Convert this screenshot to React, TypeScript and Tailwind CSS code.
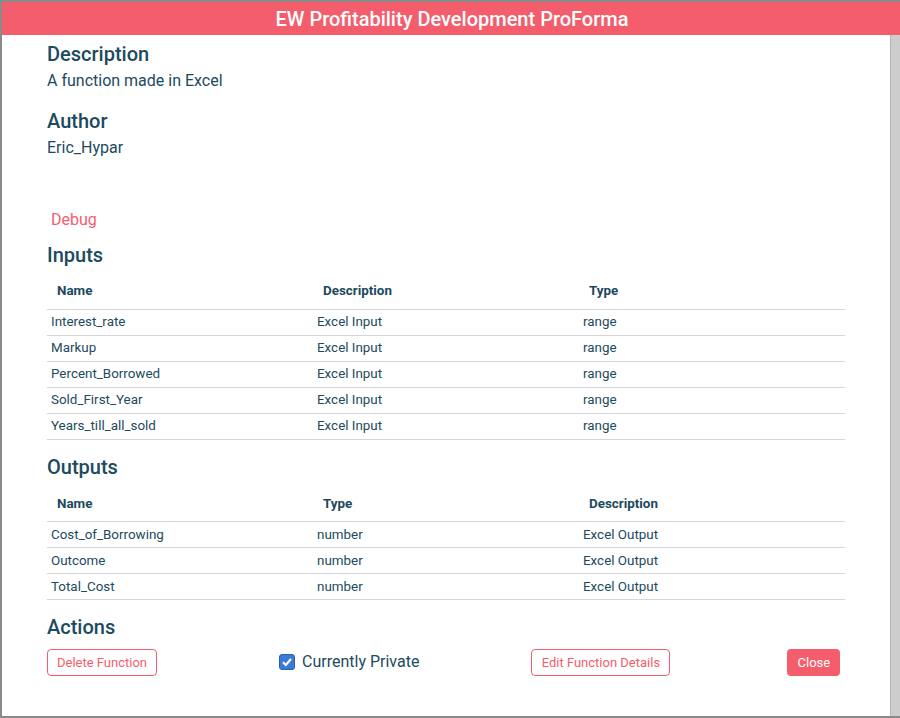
const inputs = [
  ["Interest_rate", "Excel Input", "range"],
  ["Markup", "Excel Input", "range"],
  ["Percent_Borrowed", "Excel Input", "range"],
  ["Sold_First_Year", "Excel Input", "range"],
  ["Years_till_all_sold", "Excel Input", "range"],
];

const outputs = [
  ["Cost_of_Borrowing", "number", "Excel Output"],
  ["Outcome", "number", "Excel Output"],
  ["Total_Cost", "number", "Excel Output"],
];

const DataTable = ({ head, rows }: { head: string[]; rows: string[][] }) => (
  <table className="w-[798px] border-collapse text-[13.4px] table-fixed">
    <thead>
      <tr className="h-[36px]">
        {head.map((h) => (
          <th key={h} className="text-left font-bold px-[10px] pt-[1px]">
            {h}
          </th>
        ))}
      </tr>
    </thead>
    <tbody>
      {rows.map((r) => (
        <tr key={r[0]} className="h-[26px] border-t border-b border-[#d4d6dc]">
          {r.map((c, i) => (
            <td key={i} className="px-[4px] pt-[1px]">
              {c}
            </td>
          ))}
        </tr>
      ))}
    </tbody>
  </table>
);

export default function App() {
  return (
    <div
      className="w-[900px] h-[718px] bg-[#8a8a8a] pt-[2px] pl-[2px] pb-[2px] flex flex-col"
      style={{ fontFamily: "Roboto, 'Liberation Sans', sans-serif" }}
    >
      <div className="h-[33px] bg-[#f45d6c] text-white text-[20px] font-medium flex items-center justify-center pl-[2px]">
        EW Profitability Development ProForma
      </div>
      <div className="flex flex-1 min-h-0">
        <div className="flex-1 bg-white text-[#1c4a5e] pl-[45px]">
          <h2 className="text-[20px] font-medium leading-[24px] mt-[7px]">Description</h2>
          <p className="text-[16px] leading-[20px] mt-[5px]">A function made in Excel</p>
          <h2 className="text-[20px] font-medium leading-[24px] mt-[18px]">Author</h2>
          <p className="text-[16px] leading-[20px] mt-[5px]">Eric_Hypar</p>
          <p className="text-[16px] leading-[20px] mt-[52px] ml-[4px] text-[#f45d6c]">Debug</p>
          <h2 className="text-[20px] font-medium leading-[24px] mt-[13px]">Inputs</h2>
          <div className="mt-[6px]">
            <DataTable head={["Name", "Description", "Type"]} rows={inputs} />
          </div>
          <h2 className="text-[20px] font-medium leading-[24px] mt-[15px]">Outputs</h2>
          <div className="mt-[7px]">
            <DataTable head={["Name", "Type", "Description"]} rows={outputs} />
          </div>
          <h2 className="text-[20px] font-medium leading-[24px] mt-[15px]">Actions</h2>
          <div className="flex items-center mt-[10px] text-[13px]">
            <button className="h-[27px] w-[110px] border border-[#f45d6c] text-[#f45d6c] rounded-[4px] bg-white">
              Delete Function
            </button>
            <label className="flex items-center ml-[122px] mb-[2px]">
              <span className="w-[16px] h-[16px] rounded-[3px] bg-[#3a7bd8] border border-[#2a5fae] flex items-center justify-center">
                <svg width="12" height="12" viewBox="0 0 12 12">
                  <path d="M2 6.2 L4.8 9 L10 3" stroke="white" strokeWidth="2.2" fill="none" />
                </svg>
              </span>
              <span className="text-[16px] ml-[7px]">Currently Private</span>
            </label>
            <button className="h-[27px] w-[139px] ml-[112px] border border-[#f45d6c] text-[#f45d6c] rounded-[4px] bg-white">
              Edit Function Details
            </button>
            <button className="h-[27px] w-[53px] ml-[117px] bg-[#f45d6c] text-white rounded-[4px]">
              Close
            </button>
          </div>
        </div>
        <div className="w-[10px] bg-[#cdcdcd] border-l border-[#b9b4b0]" />
      </div>
    </div>
  );
}
